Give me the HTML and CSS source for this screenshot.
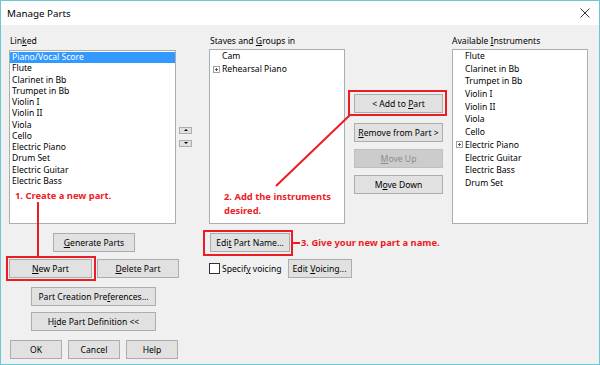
FILE: index.html
```html
<!DOCTYPE html>
<html lang="en">
<head>
    <meta charset="UTF-8">
    <title>Manage Parts</title>
    <link rel="stylesheet" href="styles.css">
</head>
<body>
    <div class="window">
        <!-- Title bar -->
        <div class="titlebar">
            <span class="titlebar__text">Manage Parts</span>
            <svg class="titlebar__close" width="10" height="10" viewBox="0 0 10 10">
                <path d="M0.5 0.5L9.5 9.5M9.5 0.5L0.5 9.5" stroke="#333" stroke-width="1" fill="none" />
            </svg>
        </div>

        <div class="dialog">
            <!-- Linked -->
            <div class="col col--linked">
                <div class="label">Lin<u>k</u>ed</div>
                <div class="col__row">
                    <ul class="list list--linked">
                        <li class="list__item is-selected">Piano/Vocal Score</li>
                        <li class="list__item">Flute</li>
                        <li class="list__item">Clarinet in Bb</li>
                        <li class="list__item">Trumpet in Bb</li>
                        <li class="list__item">Violin I</li>
                        <li class="list__item">Violin II</li>
                        <li class="list__item">Viola</li>
                        <li class="list__item">Cello</li>
                        <li class="list__item">Electric Piano</li>
                        <li class="list__item">Drum Set</li>
                        <li class="list__item">Electric Guitar</li>
                        <li class="list__item">Electric Bass</li>
                    </ul>
                    <div class="spin">
                        <button class="spin__btn spin__btn--up"></button>
                        <button class="spin__btn spin__btn--down"></button>
                    </div>
                </div>
                <div class="actions">
                    <button class="btn btn--generate"><u>G</u>enerate Parts</button>
                    <div class="actions__pair">
                        <button class="btn btn--new"><u>N</u>ew Part</button>
                        <button class="btn btn--delete"><u>D</u>elete Part</button>
                    </div>
                    <button class="btn btn--wide">Part Creation Pre<u>f</u>erences...</button>
                    <button class="btn btn--wide btn--hide">H<u>i</u>de Part Definition &lt;&lt;</button>
                    <div class="actions__footer">
                        <button class="btn btn--ok">OK</button>
                        <button class="btn btn--cancel">Cancel</button>
                        <button class="btn btn--help">Help</button>
                    </div>
                </div>
            </div>

            <!-- Staves and Groups -->
            <div class="col col--staves">
                <div class="label">Staves and <u>G</u>roups in</div>
                <div class="col__row">
                    <ul class="list list--tree list--staves">
                        <li class="list__item">Cam</li>
                        <li class="list__item"><span class="plus"></span>Rehearsal Piano</li>
                    </ul>
                    <div class="stack">
                        <button class="btn btn--add">&lt; Add to <u>P</u>art</button>
                        <button class="btn btn--remove"><u>R</u>emove from Part &gt;</button>
                        <button class="btn btn--disabled"><u>M</u>ove Up</button>
                        <button class="btn btn--down">M<u>o</u>ve Down</button>
                    </div>
                </div>
                <button class="btn btn--rename">Edi<u>t</u> Part Name...</button>
                <div class="voicing">
                    <span class="checkbox"></span>
                    <span class="voicing__text">Specif<u>y</u> voicing</span>
                    <button class="btn btn--voicing">Edit <u>V</u>oicing...</button>
                </div>
            </div>

            <!-- Available Instruments -->
            <div class="col col--available">
                <div class="label">Available <u>I</u>nstruments</div>
                <ul class="list list--tree list--available">
                    <li class="list__item">Flute</li>
                    <li class="list__item">Clarinet in Bb</li>
                    <li class="list__item">Trumpet in Bb</li>
                    <li class="list__item">Violin I</li>
                    <li class="list__item">Violin II</li>
                    <li class="list__item">Viola</li>
                    <li class="list__item">Cello</li>
                    <li class="list__item"><span class="plus"></span>Electric Piano</li>
                    <li class="list__item">Electric Guitar</li>
                    <li class="list__item">Electric Bass</li>
                    <li class="list__item">Drum Set</li>
                </ul>
            </div>
        </div>

        <!-- Annotations drawn over the dialog -->
        <svg class="marks" width="600" height="365" viewBox="0 0 600 365">
            <g fill="none" stroke="#ec1c24" stroke-width="2">
                <rect x="7" y="257" width="88" height="23" />
                <line x1="38" y1="202" x2="38" y2="257" />
                <rect x="349" y="91" width="97" height="24" />
                <line x1="276" y1="186" x2="350" y2="115" />
                <rect x="204" y="231" width="88" height="24" />
                <line x1="292" y1="243" x2="300" y2="243" />
            </g>
        </svg>
        <span class="note note--create">1. Create a new part.</span>
        <span class="note note--add">2. Add the instruments<br>desired.</span>
        <span class="note note--name">3. Give your new part a name.</span>
    </div>
</body>
</html>
```

FILE: styles.css
```css
:root {
	/* COLORS */
	--frame: #6cc7d3;
	--face: #f0f0f0;
	--btn: #e1e1e1;
	--btn-border: #adadad;
	--list-border: #abadb3;
	--select: #3399ff;
	--note: #ec1c24;
}

* {
	box-sizing: border-box;
}

body {
	margin: 0;
	font-family: "Noto Sans", "Open Sans", sans-serif;
	font-size: 8.6px;
	color: #000;
}

u {
	text-decoration-thickness: 1px;
	text-underline-offset: 1px;
}

.window {
	background: var(--face);
	border: 1px solid var(--frame);
	height: 365px;
	overflow: hidden;
	position: relative;
	width: 600px;
}

.titlebar {
	align-items: center;
	background: #fff;
	display: flex;
	height: 24px;
	justify-content: space-between;
	padding: 0 9px 0 6px;
}

.titlebar__text {
	font-size: 9.8px;
}

.dialog {
	display: flex;
	padding: 9px 0 0 8px;
}

.col {
	display: flex;
	flex-direction: column;
}

.col--linked {
	margin-right: 17px;
	width: 183px;
}

.col--staves {
	margin-right: 5px;
	width: 238px;
}

.col--available {
	width: 136px;
}

.col__row {
	display: flex;
}

.label {
	height: 15px;
	line-height: 15px;
	padding-left: 1px;
}

.col--available .label {
	padding-left: 0;
}

/* list boxes */
.list {
	background: #fff;
	border: 1px solid var(--list-border);
	height: 175px;
	list-style: none;
	margin: 0;
	padding: 0;
	width: 136px;
}

.list--linked {
	height: 174px;
	margin-top: 1px;
	padding-top: 1px;
	width: 167px;
}

.list__item {
	white-space: nowrap;
}

.list--linked .list__item {
	height: 11.25px;
	line-height: 11.25px;
	padding-left: 2px;
}

.list__item.is-selected {
	background: var(--select);
	color: #fff;
}

.list--staves .list__item {
	height: 13px;
	line-height: 13px;
	padding-left: 12px;
}

.list--available .list__item {
	height: 12.7px;
	line-height: 12.7px;
	padding-left: 12px;
}

.plus {
	border: 1px solid #a0a0a0;
	display: inline-block;
	height: 7px;
	margin-left: -9px;
	margin-right: 2px;
	position: relative;
	vertical-align: -0.5px;
	width: 7px;
}

.plus::before,
.plus::after {
	background: #555;
	content: "";
	position: absolute;
}

.plus::before {
	height: 1px;
	left: 1px;
	top: 2px;
	width: 3px;
}

.plus::after {
	height: 3px;
	left: 2px;
	top: 1px;
	width: 1px;
}

/* small up/down buttons */
.spin {
	display: flex;
	flex-direction: column;
	gap: 6px;
	margin: 78px 0 0 3px;
}

.spin__btn {
	background: var(--btn);
	border: 1px solid var(--btn-border);
	height: 7px;
	padding: 0;
	position: relative;
	width: 13px;
}

.spin__btn::before {
	border-left: 2px solid transparent;
	border-right: 2px solid transparent;
	content: "";
	left: 4px;
	position: absolute;
	top: 1px;
}

.spin__btn--up::before {
	border-bottom: 2px solid #000;
}

.spin__btn--down::before {
	border-top: 2px solid #000;
}

/* buttons */
.btn {
	background: var(--btn);
	border: 1px solid var(--btn-border);
	color: #000;
	font: inherit;
	height: 19px;
	line-height: 16px;
	padding: 0;
	text-align: center;
	white-space: nowrap;
}

.btn--disabled {
	background: #cccccc;
	border-color: #bfbfbf;
	color: #8d8d8d;
}

.actions {
	display: flex;
	flex-direction: column;
	margin-top: 9px;
}

.btn--generate {
	margin-left: 44px;
	width: 82px;
}

.actions__pair {
	display: flex;
	gap: 5px;
	margin-top: 7px;
}

.btn--new {
	width: 83px;
}

.btn--delete {
	width: 82px;
}

.btn--wide {
	margin: 9px 0 0 22px;
	width: 125px;
}

.btn--hide {
	margin-top: 6px;
}

.actions__footer {
	display: flex;
	gap: 6px;
	margin-top: 9px;
}

.btn--ok {
	margin-left: 1px;
	width: 52px;
}

.btn--cancel,
.btn--help {
	width: 52px;
}

.stack {
	display: flex;
	flex-direction: column;
	margin: 45px 0 0 9px;
	width: 89px;
}

.btn--remove {
	margin-top: 10px;
}

.btn--disabled,
.btn--down {
	margin-top: 7px;
}

.btn--rename {
	margin: 9px 0 0 1px;
	width: 80px;
}

.voicing {
	align-items: center;
	display: flex;
	margin-top: 7px;
}

.checkbox {
	background: #fff;
	border: 1px solid #333;
	height: 11px;
	margin-right: 2px;
	width: 11px;
}

.voicing__text {
	margin-right: 6px;
}

.btn--voicing {
	width: 64px;
}

/* annotations */
.marks {
	left: -1px;
	pointer-events: none;
	position: absolute;
	top: -1px;
}

.note {
	color: var(--note);
	font-size: 9.4px;
	font-weight: 700;
	line-height: 14px;
	position: absolute;
	white-space: nowrap;
}

.note--create {
	left: 14px;
	top: 188px;
}

.note--add {
	left: 223px;
	top: 189px;
}

.note--name {
	left: 300px;
	top: 235px;
}
```
